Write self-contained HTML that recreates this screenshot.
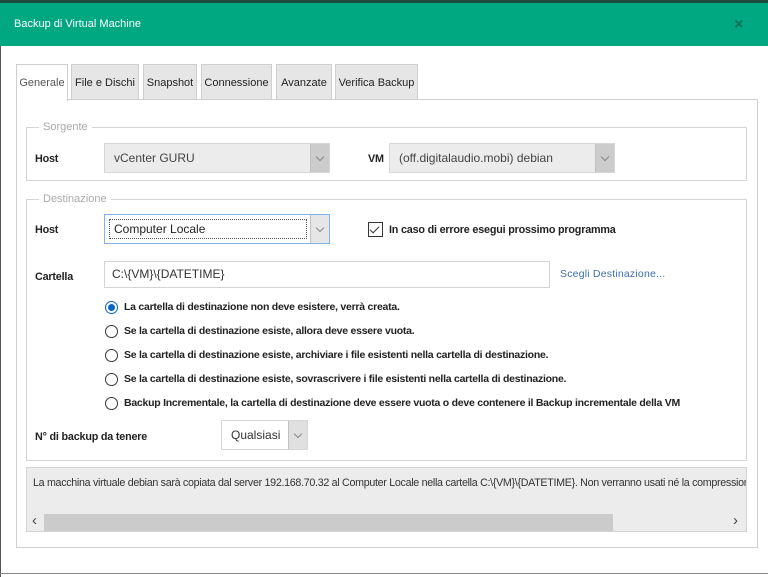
<!DOCTYPE html>
<html><head><meta charset="utf-8"><style>
*{box-sizing:border-box;margin:0;padding:0}
body{width:768px;height:577px;background:#fff;position:relative;overflow:hidden;font-family:"Liberation Sans",sans-serif;font-size:11px;color:#222}
.a{position:absolute;white-space:nowrap}
.b{border:1px solid #d4d4d4}
.tab{position:absolute;top:64px;height:36px;background:#e6e6e6;border:1px solid #cfcfcf;border-bottom:none;font-size:11px;line-height:36px;text-align:center;color:#222}
.lbl{font-weight:bold;font-size:10.8px;letter-spacing:-0.2px}
.combo{position:absolute;border:1px solid #d6d6d6;background:#ececec;color:#444;font-size:12px;padding-left:9px}
.arr{position:absolute;top:0;right:0;bottom:0;width:19px;background:#ccc;border-left:1px solid #c0c0c0}
.arr:after{content:"";position:absolute;left:6px;top:50%;margin-top:-4px;width:5px;height:5px;border-right:1px solid #888;border-bottom:1px solid #888;transform:rotate(45deg)}
.rad{position:absolute;left:105px;width:13px;height:13px;border:1px solid #333;border-radius:50%;background:#fff}
.rt{position:absolute;left:124px;font-size:10.5px;font-weight:bold;letter-spacing:-0.25px;color:#222}
.leg{position:absolute;background:#fff;color:#aaa;font-size:11px;padding:0 4px}
</style></head><body>
<div class="a" style="left:0;top:0;width:768px;height:3px;background:#1f4a3f"></div>
<div class="a" style="left:0;top:3px;width:768px;height:43px;background:#00a881"></div>
<div class="a" style="left:14px;top:18px;color:#fff;font-size:11px">Backup di Virtual Machine</div>
<div class="a" style="left:734px;top:16px;color:#137058;font-size:16px;font-weight:bold">×</div>
<div class="a" style="left:0;top:46px;width:1px;height:531px;background:#555"></div>
<div class="a" style="left:0;top:573px;width:768px;height:1px;background:#888"></div>

<div class="tab" style="left:16px;width:52px;background:#fff;color:#555;height:37px;z-index:2">Generale</div>
<div class="tab" style="left:71px;width:68px">File e Dischi</div>
<div class="tab" style="left:143px;width:54px">Snapshot</div>
<div class="tab" style="left:201px;width:71px">Connessione</div>
<div class="tab" style="left:276px;width:56px">Avanzate</div>
<div class="tab" style="left:335px;width:83px">Verifica Backup</div>
<div class="a b" style="left:16px;top:99px;width:742px;height:449px;border-color:#d0d0d0"></div>

<div class="a b" style="left:26px;top:127px;width:721px;height:54px"></div>
<div class="leg" style="left:39px;top:121px">Sorgente</div>
<div class="a lbl" style="left:35px;top:153px">Host</div>
<div class="combo" style="left:104px;top:143px;width:226px;height:30px;line-height:28px">vCenter GURU<div class="arr"></div></div>
<div class="a lbl" style="left:368px;top:153px">VM</div>
<div class="combo" style="left:389px;top:143px;width:226px;height:30px;line-height:28px">(off.digitalaudio.mobi) debian<div class="arr"></div></div>

<div class="a b" style="left:26px;top:199px;width:721px;height:262px"></div>
<div class="leg" style="left:39px;top:193px">Destinazione</div>
<div class="a lbl" style="left:35px;top:224px">Host</div>
<div class="combo" style="left:104px;top:214px;width:226px;height:30px;line-height:26px;background:#fff;border-color:#7eb4ea;color:#222;padding-left:0">
<div style="position:absolute;left:4px;top:4px;width:198px;height:20px;border:1px dotted #555;line-height:18px;padding-left:4px">Computer Locale</div><div class="arr" style="background:#e6e6e6"></div></div>
<div class="a" style="left:368px;top:222px;width:15px;height:15px;border:1px solid #333;background:#fff"></div>
<div class="a" style="left:372px;top:224px;width:5px;height:9px;border-right:1.5px solid #333;border-bottom:1.5px solid #333;transform:rotate(45deg)"></div>
<div class="a lbl" style="left:389px;top:224px">In caso di errore esegui prossimo programma</div>

<div class="a lbl" style="left:35px;top:271px">Cartella</div>
<div class="a b" style="left:104px;top:261px;width:446px;height:27px;line-height:25px;padding-left:7px;font-size:12px;color:#333">C:\{VM}\{DATETIME}</div>
<div class="a" style="left:560px;top:268px;color:#3a6fb0;font-size:10.5px;letter-spacing:0.2px">Scegli Destinazione...</div>

<div class="rad" style="top:301px;border-color:#0a64c8"><div style="position:absolute;left:2px;top:2px;width:7px;height:7px;border-radius:50%;background:#0a64c8"></div></div>
<div class="rt" style="top:301px">La cartella di destinazione non deve esistere, verrà creata.</div>
<div class="rad" style="top:325px"></div>
<div class="rt" style="top:325px">Se la cartella di destinazione esiste, allora deve essere vuota.</div>
<div class="rad" style="top:349px"></div>
<div class="rt" style="top:349px">Se la cartella di destinazione esiste, archiviare i file esistenti nella cartella di destinazione.</div>
<div class="rad" style="top:373px"></div>
<div class="rt" style="top:373px">Se la cartella di destinazione esiste, sovrascrivere i file esistenti nella cartella di destinazione.</div>
<div class="rad" style="top:397px"></div>
<div class="rt" style="top:397px">Backup Incrementale, la cartella di destinazione deve essere vuota o deve contenere il Backup incrementale della VM</div>

<div class="a lbl" style="left:35px;top:431px">N° di backup da tenere</div>
<div class="combo" style="left:221px;top:420px;width:87px;height:30px;line-height:28px;background:#fff;color:#333">Qualsiasi<div class="arr" style="background:#e0e0e0"></div></div>

<div class="a b" style="left:26px;top:467px;width:721px;height:65px;background:#ececec;overflow:hidden">
<div class="a" style="left:6px;top:9px;font-size:10.7px;letter-spacing:-0.3px;color:#333">La macchina virtuale debian sarà copiata dal server 192.168.70.32 al Computer Locale nella cartella C:\{VM}\{DATETIME}. Non verranno usati né la compressione né la crittografia.</div>
<div class="a" style="left:17px;top:46px;width:569px;height:17px;background:#cbcbcb"></div>
<div class="a" style="left:5px;top:44px;font-size:15px;color:#444">‹</div>
<div class="a" style="left:706px;top:44px;font-size:15px;color:#444">›</div>
</div>
</body></html>
